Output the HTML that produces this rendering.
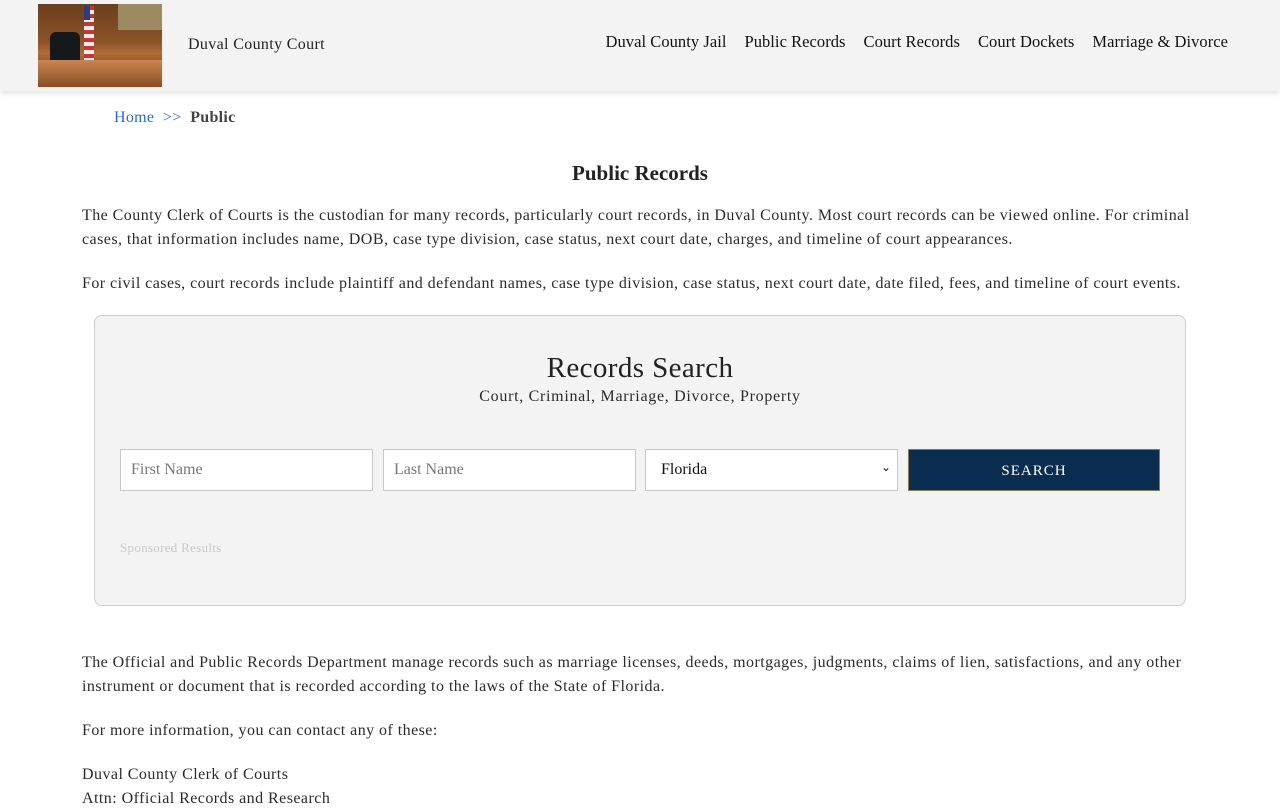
<!DOCTYPE html>
<html><head><meta charset="utf-8"><style>
*{box-sizing:border-box;margin:0;padding:0}
body{width:1280px;height:800px;overflow:hidden;background:#fff;font-family:"Liberation Serif",serif;color:#2b2b2b}
.hdr{position:absolute;left:0;top:0;width:1280px;height:91px;background:#f3f3f3;box-shadow:0 2px 6px rgba(0,0,0,.12)}
.logo{position:absolute;left:38px;top:4px;width:124px;height:83px;background:linear-gradient(180deg,#6b3f1e 0%,#8a5328 45%,#b06c36 60%,#7a4420 80%,#a86a38 100%)}
.logo .w{position:absolute;left:80px;top:0;width:44px;height:26px;background:#9b8a62}
.logo .c{position:absolute;left:12px;top:28px;width:30px;height:34px;background:#15191b;border-radius:6px 6px 2px 2px}
.logo .f{position:absolute;left:46px;top:2px;width:10px;height:54px;background:repeating-linear-gradient(180deg,#c33 0 4px,#eee 4px 8px)}
.logo .f:before{content:"";position:absolute;left:0;top:0;width:6px;height:14px;background:#2a3e80}
.logo .d{position:absolute;left:0;top:56px;width:124px;height:27px;background:linear-gradient(180deg,#c98552,#8a4f24)}
.site{position:absolute;left:188px;top:36px;font-size:16px;letter-spacing:.35px;color:#222}
.nav{position:absolute;right:52px;top:32px;font-size:16.5px;letter-spacing:.05px;color:#111;white-space:nowrap}
.nav span{margin-left:18px}
.bc{position:absolute;left:114px;top:109px;font-size:16px;letter-spacing:.3px}
.bc a{color:#2a6ad8;text-decoration:none}
.bc b{color:#444}
h1{position:absolute;left:0;width:1280px;top:161px;text-align:center;font-size:21px;font-weight:bold;color:#222}
p{position:absolute;left:82px;width:1120px;font-size:16px;letter-spacing:.45px;line-height:24px;color:#2b2b2b}
.box{position:absolute;left:94px;top:315px;width:1092px;height:291px;background:#f3f3f3;border:1px solid #ccc;border-radius:8px}
.box h2{position:absolute;left:0;width:100%;top:36px;text-align:center;font-weight:normal;font-size:29px;letter-spacing:.4px;color:#222}
.box .sub{position:absolute;left:0;width:100%;top:72px;text-align:center;font-size:16px;letter-spacing:.7px}
.in{position:absolute;top:133px;width:253px;height:42px;background:#fff;border:1px solid #c8c8c8;font-size:16px;color:#777;padding:11px 10px}
.btn{position:absolute;left:813px;top:133px;width:252px;height:42px;background:#0b2e50;border:1px solid #8a7a50;color:#fff;font-size:15px;letter-spacing:1px;text-align:center;line-height:42px}
.sp{position:absolute;left:25px;top:224px;font-size:13px;letter-spacing:.3px;color:#c8c8c8}
</style></head><body>
<div class="hdr">
<div class="logo"><div class="w"></div><div class="c"></div><div class="f"></div><div class="d"></div></div>
<div class="site">Duval County Court</div>
<div class="nav"><span>Duval County Jail</span><span>Public Records</span><span>Court Records</span><span>Court Dockets</span><span>Marriage &amp; Divorce</span></div>
</div>
<div class="bc"><a>Home</a> &nbsp;<a>&gt;&gt;</a>&nbsp; <b>Public</b></div>
<h1>Public Records</h1>
<p style="top:204px">The County Clerk of Courts is the custodian for many records, particularly court records, in Duval County. Most court records can be viewed online. For criminal cases, that information includes name, DOB, case type division, case status, next court date, charges, and timeline of court appearances.</p>
<p style="top:272px">For civil cases, court records include plaintiff and defendant names, case type division, case status, next court date, date filed, fees, and timeline of court events.</p>
<div class="box">
<h2>Records Search</h2>
<div class="sub">Court, Criminal, Marriage, Divorce, Property</div>
<div class="in" style="left:25px">First Name</div>
<div class="in" style="left:288px">Last Name</div>
<div class="in" style="left:550px;color:#111;padding-left:15px">Florida<span style="position:absolute;right:6px;top:10px;font-size:12px">&#8964;</span></div>
<div class="btn">SEARCH</div>
<div class="sp">Sponsored Results</div>
</div>
<p style="top:651px">The Official and Public Records Department manage records such as marriage licenses, deeds, mortgages, judgments, claims of lien, satisfactions, and any other instrument or document that is recorded according to the laws of the State of Florida.</p>
<p style="top:719px">For more information, you can contact any of these:</p>
<p style="top:763px">Duval County Clerk of Courts<br>Attn: Official Records and Research</p>
</body></html>
